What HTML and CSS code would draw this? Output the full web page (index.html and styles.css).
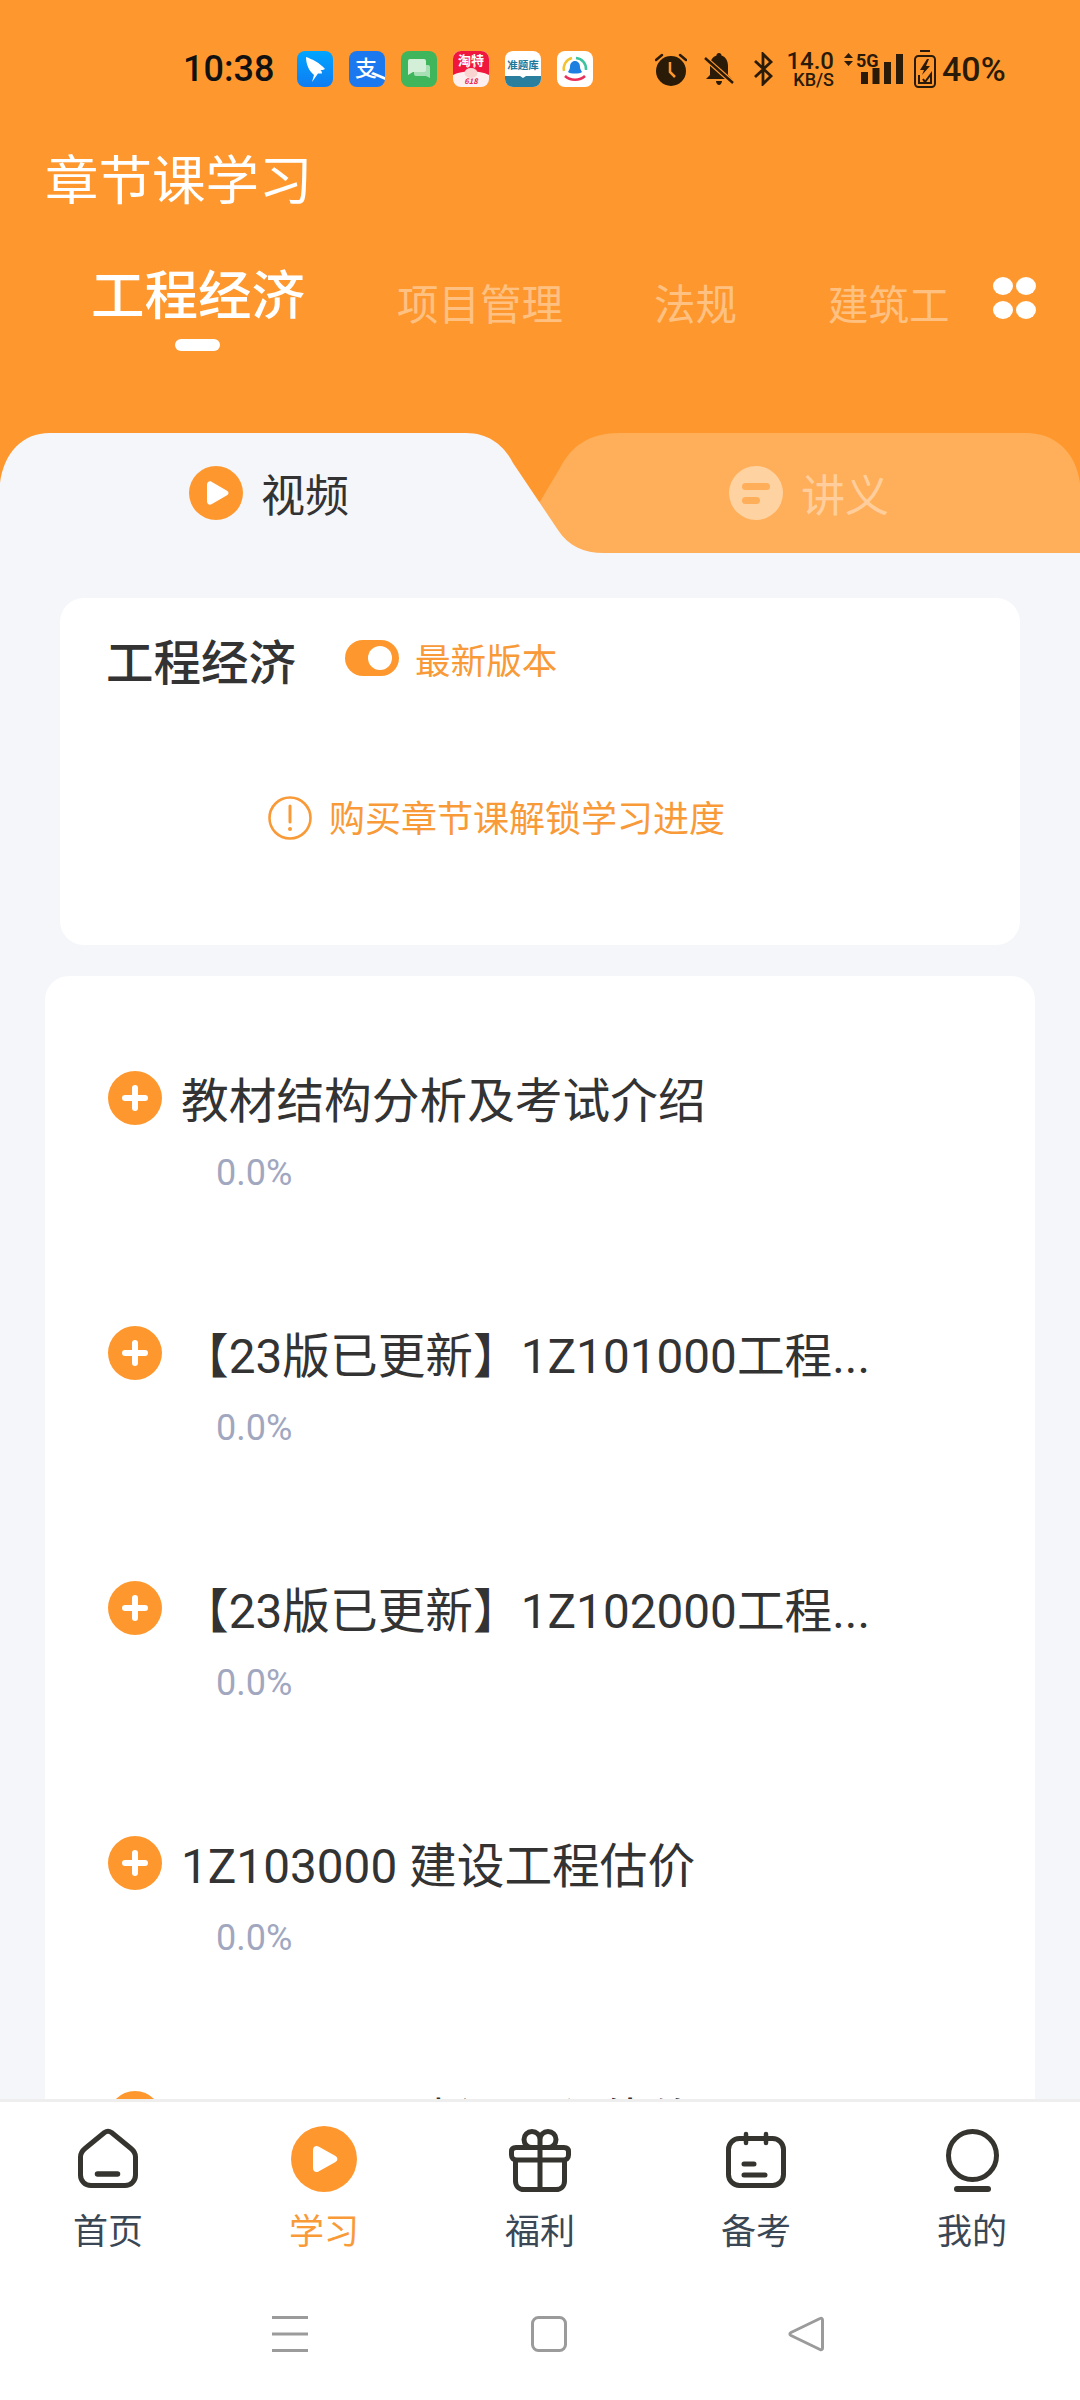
FILE: index.html
```html
<!DOCTYPE html>
<html lang="zh-CN">
<head>
<meta charset="utf-8">
<title>章节课学习</title>
<link rel="stylesheet" href="styles.css">
</head>
<body>
<div class="page">
  <header class="hero">
    <div class="status">
      <span class="clock">10:38</span>
      <div class="apps">
        <svg class="app" viewBox="0 0 36 36"><defs><linearGradient id="ding" x1="0" y1="0" x2="0" y2="1"><stop offset="0" stop-color="#00a5ff"/><stop offset="1" stop-color="#0f7cf2"/></linearGradient></defs><rect width="36" height="36" rx="8" fill="url(#ding)"/><path d="M9 6c6 2 14 6 19 12-1.500 1-3 1-4.500 1 1 1 1.500 2 1.500 3.500-1.500 0-3 0-4 0L15 31l2-7C12 20 9 13 9 6z" fill="#fff"/></svg>
        <svg class="app" viewBox="0 0 36 36"><rect width="36" height="36" rx="8" fill="#1c78ee"/><text class="app-word" x="17" y="25" font-size="22" font-weight="500" fill="#fff" text-anchor="middle">支</text><path d="M24 21l12 5v3l-14-6z" fill="#fff"/></svg>
        <svg class="app" viewBox="0 0 36 36"><rect width="36" height="36" rx="8" fill="#3fb55c"/><path d="M15 14h12a2 2 0 0 1 2 2v11l-4-2H15a2 2 0 0 1-2-2v-7a2 2 0 0 1 2-2z" fill="#a8dfb4"/><path d="M9 8h14a2 2 0 0 1 2 2v9a2 2 0 0 1-2 2H12l-5 3V10a2 2 0 0 1 2-2z" fill="#d3efd8"/></svg>
        <svg class="app" viewBox="0 0 36 36"><rect width="36" height="36" rx="8" fill="#fdeef0"/><path d="M0 8a8 8 0 0 1 8-8h20a8 8 0 0 1 8 8v16c-10-5-26-5-36 0z" fill="#f0173f"/><text class="app-word" x="18" y="14" font-size="13" font-weight="700" fill="#fff" text-anchor="middle">淘特</text><path d="M14 17l-1-4 3 3zM22 17l1-4-3 3z" fill="#f8d5d0"/><ellipse cx="18" cy="22" rx="6.500" ry="5" fill="#f8d5d0"/><text class="app-word" x="18" y="33" font-size="7.500" font-style="italic" font-weight="700" fill="#e8274b" text-anchor="middle">618</text></svg>
        <svg class="app" viewBox="0 0 36 36"><rect width="36" height="36" rx="8" fill="#fff"/><text class="app-word" x="18" y="18" font-size="10.500" font-weight="700" fill="#20789a" text-anchor="middle">准题库</text><path d="M0 25h15l3 2 3-2h15v3a8 8 0 0 1-8 8H8a8 8 0 0 1-8-8z" fill="#2b7f9e"/></svg>
        <svg class="app" viewBox="0 0 36 36"><rect width="36" height="36" rx="8" fill="#fff"/><path d="M7 20A11 11 0 0 1 15 7" fill="none" stroke="#f2c230" stroke-width="2.500"/><path d="M19 7a11 11 0 0 1 10 12" fill="none" stroke="#3cc3a0" stroke-width="2.500"/><path d="M8 25c5 5 15 5 20 0" fill="none" stroke="#e8305a" stroke-width="2.500"/><path d="M18 10c3 0 5 2.500 5 6 0 2 1 3 2 5-2 2-12 2-14 0 1-2 2-3 2-5 0-3.500 2-6 5-6z" fill="#1d7fe0"/></svg>
      </div>
      <div class="indicators">
        <svg class="ind-alarm" viewBox="0 0 32 34"><path d="M1 8l6-5M31 8l-6-5" stroke="#2a1a08" stroke-width="2.500" stroke-linecap="round"/><circle cx="16" cy="19" r="15" fill="#2a1a08"/><path d="M15 10v10l5 5" fill="none" stroke="#fe982e" stroke-width="2.500"/></svg>
        <svg class="ind-bell" viewBox="0 0 30 34"><path d="M15 1c1.500 0 2.500 1 2.500 2.500C22 5 24 9 24 14v9l4 4H2l4-4v-9c0-5 2-9 6.500-10.500C12.500 2 13.500 1 15 1zM12 29h6c0 2-1.500 4-3 4s-3-2-3-4z" fill="#2a1a08"/><path d="M1 6l28 25" stroke="#fe982e" stroke-width="5"/><path d="M1 6l28 25" stroke="#2a1a08" stroke-width="2.500"/></svg>
        <svg class="ind-bt" viewBox="0 0 21 34"><path d="M2 9l16 15-8 8V2l8 8L2 25" fill="none" stroke="#2a1a08" stroke-width="2.800"/></svg>
        <div class="speed"><b>14.0</b><span>KB/S</span></div>
        <svg class="ind-net" viewBox="0 0 62 36"><path d="M1 7l4.500-5L10 7zM1 10l4.500 5L10 10z" fill="#2a1a08"/><rect x="18" y="21" width="7" height="12" fill="#2a1a08"/><rect x="29.500" y="17" width="7" height="16" fill="#2a1a08"/><rect x="41" y="11" width="7" height="22" fill="#2a1a08"/><rect x="53" y="3" width="7" height="30" fill="#2a1a08"/><text class="net-word" x="13" y="15.500" font-size="18" fill="#2a1a08">5G</text></svg>
        <svg class="ind-batt" viewBox="0 0 22 38"><path d="M6 1h10" stroke="#2a1a08" stroke-width="2"/><rect x="1" y="6" width="20" height="31" rx="3.500" fill="none" stroke="#2a1a08" stroke-width="2"/><path d="M13 9l-7 11h4l-2 5 8-9h-4l3-7z" fill="#2a1a08"/><path d="M5 25v8h12v-9l-6 8-2-3" fill="none" stroke="#2a1a08" stroke-width="2"/></svg>
        <span class="battery-text">40%</span>
      </div>
    </div>
    <h1 class="title">章节课学习</h1>
    <div class="subjects">
      <div class="subject subject-active">工程经济<i class="subject-bar"></i></div>
      <div class="subject subject-a">项目管理</div>
      <div class="subject subject-b">法规</div>
      <div class="subject subject-c">建筑工</div>
      <svg class="dots" viewBox="0 0 43 42"><ellipse cx="10" cy="9" rx="10" ry="9" fill="#fff"/><ellipse cx="33" cy="9" rx="10" ry="9" fill="#fff"/><ellipse cx="10" cy="33" rx="10" ry="9" fill="#fff"/><ellipse cx="33" cy="33" rx="10" ry="9" fill="#fff"/></svg>
    </div>
  </header>

  <nav class="switch">
    <svg class="switch-bg" viewBox="0 0 1080 120" preserveAspectRatio="none">
      <rect width="1080" height="120" fill="#fe982e"/>
      <path d="M500 120L541 67 560 35C572 12 590 0 620 0H1026C1056 0 1076 20 1080 50V120z" fill="#ffae59"/>
      <path d="M0 50C4 20 22 0 50 0H466C490 0 505 14 513 30L558 97C568 113 584 120 604 120H0z" fill="#f4f6fa"/>
    </svg>
    <div class="switch-tab switch-on">
      <svg class="switch-icon" viewBox="0 0 54 54"><circle cx="27" cy="27" r="27" fill="#fe982e"/><path d="M18 18.500c0-2.500 2.500-4 4.500-2.700l15.500 9c2 1.200 2 3.200 0 4.400l-15.500 9c-2 1.300-4.500-.2-4.500-2.700z" fill="#fff"/></svg>
      <span>视频</span>
    </div>
    <div class="switch-tab switch-off">
      <svg class="switch-icon" viewBox="0 0 54 54"><circle cx="27" cy="27" r="27" fill="#ffd3a1"/><rect x="13" y="17" width="28" height="7" rx="3.500" fill="#ffae59"/><rect x="13" y="31" width="18" height="7" rx="3.500" fill="#ffae59"/></svg>
      <span>讲义</span>
    </div>
  </nav>

  <main class="content">
    <section class="summary">
      <div class="summary-head">
        <h2 class="summary-title">工程经济</h2>
        <i class="toggle"></i>
        <span class="summary-tag">最新版本</span>
      </div>
      <div class="notice">
        <svg class="notice-icon" viewBox="0 0 44 44"><circle cx="22" cy="22" r="20.500" fill="none" stroke="#f99a38" stroke-width="2.600"/><path d="M22 10v16" stroke="#f99a38" stroke-width="3" stroke-linecap="round"/><circle cx="22" cy="33" r="2" fill="#f99a38"/></svg>
        <span class="notice-text">购买章节课解锁学习进度</span>
      </div>
    </section>

    <section class="chapters">
      <article class="chapter">
        <div class="chapter-head"><svg class="plus" viewBox="0 0 54 54"><use href="#plus-mark"/></svg><span class="chapter-name">教材结构分析及考试介绍</span></div>
        <div class="chapter-rate">0.0%</div>
      </article>
      <article class="chapter">
        <div class="chapter-head"><svg class="plus" viewBox="0 0 54 54"><use href="#plus-mark"/></svg><span class="chapter-name">【23版已更新】1Z101000工程...</span></div>
        <div class="chapter-rate">0.0%</div>
      </article>
      <article class="chapter">
        <div class="chapter-head"><svg class="plus" viewBox="0 0 54 54"><use href="#plus-mark"/></svg><span class="chapter-name">【23版已更新】1Z102000工程...</span></div>
        <div class="chapter-rate">0.0%</div>
      </article>
      <article class="chapter">
        <div class="chapter-head"><svg class="plus" viewBox="0 0 54 54"><use href="#plus-mark"/></svg><span class="chapter-name">1Z103000 建设工程估价</span></div>
        <div class="chapter-rate">0.0%</div>
      </article>
      <article class="chapter">
        <div class="chapter-head"><svg class="plus" viewBox="0 0 54 54"><use href="#plus-mark"/></svg><span class="chapter-name">1Z103000 建设工程估价</span></div>
      </article>
    </section>
  </main>

  <footer class="dock">
    <div class="tabbar">
      <div class="tabbar-item">
        <svg class="tabbar-icon" viewBox="0 0 66 66"><path d="M29.500 6.500L10 22.500C7 25 5.500 28 5.500 31V49C5.500 55 10 59.500 16 59.500H50C56 59.500 60.500 55 60.500 49V31C60.500 28 59 25 56 22.500L36.500 6.500C34 4.700 32 4.700 29.500 6.500z" fill="none" stroke="#35342e" stroke-width="5" stroke-linejoin="round"/><path d="M22.500 48h20" stroke="#35342e" stroke-width="5.500" stroke-linecap="round"/></svg>
        <span>首页</span>
      </div>
      <div class="tabbar-item tabbar-on">
        <svg class="tabbar-icon" viewBox="0 0 66 66"><circle cx="33" cy="33" r="33" fill="#fe982e"/><path d="M22 24c0-3.500 3-5 5.500-3.500l17 9.500c2.500 1.500 2.500 4.500 0 6l-17 9.500c-2.500 1.500-5.500 0-5.500-3.500z" fill="#fff"/></svg>
        <span>学习</span>
      </div>
      <div class="tabbar-item">
        <svg class="tabbar-icon" viewBox="0 0 66 66"><path d="M9 21.500h48c3 0 4.500 1.500 4.500 4V29c0 3-2 5-5 5H9.500c-3 0-5-2-5-5v-3.500c0-2.500 1.500-4 4.500-4zM8.500 34v21c0 5 3.500 8.500 8.500 8.500h32c5 0 8.500-3.500 8.500-8.500V34M33 21.500v42M33 21.500v-8a8 8 0 1 0-8 8h16a8 8 0 1 0-8-8" fill="none" stroke="#35342e" stroke-width="5" stroke-linejoin="round"/></svg>
        <span>福利</span>
      </div>
      <div class="tabbar-item">
        <svg class="tabbar-icon" viewBox="0 0 66 66"><rect x="5.500" y="12.500" width="55" height="47" rx="11" fill="none" stroke="#35342e" stroke-width="5"/><path d="M23 8v9M43 8v9" stroke="#35342e" stroke-width="4.500" stroke-linecap="round"/><path d="M21 38h10M21 49h21" stroke="#35342e" stroke-width="5" stroke-linecap="round"/></svg>
        <span>备考</span>
      </div>
      <div class="tabbar-item">
        <svg class="tabbar-icon" viewBox="0 0 66 66"><circle cx="33.500" cy="29.500" r="24" fill="none" stroke="#35342e" stroke-width="5"/><path d="M18 63h31" stroke="#35342e" stroke-width="6" stroke-linecap="round"/></svg>
        <span>我的</span>
      </div>
    </div>
    <div class="gestures">
      <svg class="gesture-menu" viewBox="0 0 36 36"><path d="M0 1.500h36M0 18h36M0 34.500h36" stroke="#9b9b9b" stroke-width="3"/></svg>
      <svg class="gesture-home" viewBox="0 0 36 36"><rect x="1.500" y="1.500" width="33" height="33" rx="6" fill="none" stroke="#9b9b9b" stroke-width="3"/></svg>
      <svg class="gesture-back" viewBox="0 0 36 36"><path d="M32 2.500c1.500-.8 2.500 0 2.500 1.500v28c0 1.500-1 2.300-2.500 1.500L3 19.500c-1.500-.8-1.500-2.200 0-3z" fill="none" stroke="#9b9b9b" stroke-width="3" stroke-linejoin="round"/></svg>
    </div>
  </footer>
</div>

<svg class="sprites" aria-hidden="true">
  <symbol id="plus-mark" viewBox="0 0 54 54">
    <circle cx="27" cy="27" r="27" fill="#fe982e"/>
    <path d="M27 17v20M17 27h20" stroke="#fff" stroke-width="6" stroke-linecap="round"/>
  </symbol>
</svg>
</body>
</html>
```
FILE: styles.css
```css
* { box-sizing: border-box; }

html, body {
  margin: 0;
  padding: 0;
  background: #f4f6fa;
}

body {
  width: 1080px;
  height: 2400px;
  overflow: hidden;
  font-family: Roboto, "Noto Sans CJK SC", sans-serif;
  color: #333;
}

svg { display: block; flex: none; }

.sprites { width: 0; height: 0; position: absolute; }

.page {
  position: relative;
  width: 1080px;
  height: 2400px;
  overflow: hidden;
}

/* Orange header */
.hero {
  height: 433px;
  padding-top: 51px;
  background: #fe982e;
  color: #fff;
}

.status {
  display: flex;
  align-items: center;
  height: 36px;
  padding-left: 183px;
}

.clock {
  width: 114px;
  font-size: 36px;
  font-weight: 500;
  line-height: 36px;
  color: #111;
}

.apps { display: flex; gap: 16px; }
.app { width: 36px; height: 36px; }
.app-word { font-family: "Noto Sans CJK SC", sans-serif; }
.net-word { font-family: Roboto, sans-serif; font-weight: 700; }

.indicators {
  display: flex;
  align-items: center;
  margin-left: 62px;
  height: 40px;
}

.ind-alarm { width: 32px; height: 34px; }
.ind-bell { width: 30px; height: 34px; margin-left: 17px; }
.ind-bt { width: 21px; height: 34px; margin-left: 19px; }

.speed {
  width: 50px;
  margin-left: 10px;
  display: flex;
  flex-direction: column;
  align-items: flex-end;
  color: #2a1a08;
}
.speed b { font-size: 24px; font-weight: 500; line-height: 21px; }
.speed span { font-size: 18px; font-weight: 500; line-height: 16px; }

.ind-net { width: 62px; height: 36px; margin-left: 9px; }
.ind-batt { width: 22px; height: 38px; margin-left: 9px; }
.battery-text {
  margin-left: 6px;
  font-size: 34px;
  font-weight: 500;
  color: #2a1a08;
}

.title {
  margin: 59px 0 0;
  padding-left: 45px;
  font-size: 53.500px;
  line-height: 72px;
  font-weight: 400;
}

.subjects {
  display: flex;
  align-items: flex-end;
  height: 76px;
  margin-top: 41px;
  padding: 0 44px 0 91px;
}

.subject {
  position: relative;
  font-size: 41.500px;
  line-height: 58px;
  color: rgba(255, 255, 255, 0.42);
  white-space: nowrap;
}

.subject-active {
  font-size: 53.500px;
  font-weight: 500;
  line-height: 76px;
  color: #fff;
}

.subject-bar {
  position: absolute;
  left: 84px;
  top: 80px;
  width: 45px;
  height: 12px;
  border-radius: 6px;
  background: #fff;
}

.subject-a { margin-left: 92px; }
.subject-b { margin-left: 91px; }
.subject-c { margin-left: 91px; font-size: 40.500px; }

.dots {
  width: 43px;
  height: 42px;
  margin-left: auto;
  align-self: flex-start;
  margin-top: 18px;
}

/* Video and handout switch */
.switch {
  position: relative;
  display: flex;
  height: 120px;
}

.switch-bg {
  position: absolute;
  inset: 0;
  width: 1080px;
  height: 120px;
}

.switch-tab {
  position: relative;
  display: flex;
  align-items: center;
  gap: 18px;
  height: 120px;
  font-size: 44px;
}

.switch-on { width: 729px; padding-left: 189px; color: #333; }
.switch-off { color: rgba(255, 255, 255, 0.42); }

.switch-icon { width: 54px; height: 54px; }

/* Content cards */
.content { padding-top: 45px; }

.summary {
  width: 960px;
  height: 347px;
  margin-left: 60px;
  padding: 40px 46px 0;
  border-radius: 24px;
  background: #fff;
}

.summary-head { display: flex; align-items: flex-start; height: 46px; }

.summary-title {
  margin: 0;
  font-size: 47.500px;
  font-weight: 500;
  line-height: 52px;
  color: #333;
}

.toggle {
  position: relative;
  width: 54px;
  height: 36px;
  margin: 2px 0 0 49px;
  border-radius: 18px;
  background: #fe982e;
}

.toggle::after {
  content: "";
  position: absolute;
  right: 7px;
  top: 6px;
  width: 24px;
  height: 24px;
  border-radius: 50%;
  background: #fff;
}

.summary-tag {
  margin-left: 16px;
  font-size: 35.600px;
  line-height: 48px;
  color: #f99a38;
}

.notice {
  display: flex;
  align-items: center;
  gap: 17px;
  margin: 109px 0 0 162px;
  font-size: 36px;
  line-height: 44px;
  color: #f99a38;
}

.notice-icon { width: 44px; height: 44px; }
.notice-text { padding-top: 5px; }

.chapters {
  width: 990px;
  height: 1300px;
  margin: 31px 0 0 45px;
  padding: 95px 0 0 63px;
  border-radius: 24px 24px 0 0;
  background: #fff;
}

.chapter { height: 255px; }

.chapter-head { display: flex; align-items: flex-start; gap: 19px; height: 54px; }

.plus { width: 54px; height: 54px; }

.chapter-name {
  font-size: 47.700px;
  line-height: 62px;
  color: #333;
  white-space: nowrap;
}

.chapter-rate {
  margin: 27px 0 0 108px;
  font-size: 36px;
  line-height: 42px;
  color: #a1a7bf;
}

/* Bottom navigation */
.dock {
  position: absolute;
  left: 0;
  right: 0;
  bottom: 0;
  height: 301px;
  background: #fff;
  border-top: 3px solid #eeeeef;
}

.tabbar { display: flex; padding-top: 24px; }

.tabbar-item {
  flex: 0 0 216px;
  display: flex;
  flex-direction: column;
  align-items: center;
  gap: 21px;
  font-size: 35px;
  line-height: 40px;
  color: #3b4754;
}

.tabbar-on { color: #f99a38; }

.tabbar-icon { width: 66px; height: 66px; }

.gestures {
  position: relative;
  height: 37px;
  margin-top: 63px;
}

.gesture-menu, .gesture-home, .gesture-back { position: absolute; top: 0; height: 36px; width: 36px; }
.gesture-menu { left: 272px; }
.gesture-home { left: 531px; }
.gesture-back { left: 788px; }
```
